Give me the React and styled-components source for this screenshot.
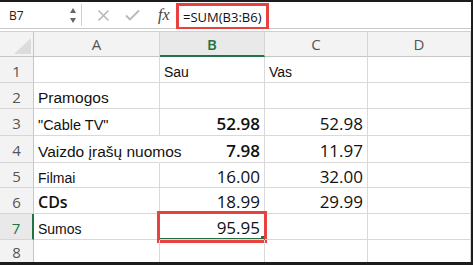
import React from "react";
import styled, { createGlobalStyle, css } from "styled-components";

const GlobalStyle = createGlobalStyle`
  html, body {
    margin: 0;
    padding: 0;
    background: #fff;
  }
`;

const GREEN = "#217346";
const RED = "#e8413f";
const GRID = "#d9d9d9";

const Frame = styled.div`
  width: 473px;
  height: 265px;
  box-sizing: border-box;
  border: 2px solid #1c1c1c;
  border-left: none;
  border-bottom-width: 3px;
  display: flex;
  flex-direction: column;
  overflow: hidden;
  background: #fff;
`;

const FormulaBar = styled.div`
  height: 26px;
  flex-shrink: 0;
  display: flex;
  align-items: stretch;
  border-bottom: 1px solid #c8c8c8;
`;

const NameBox = styled.div`
  width: 82px;
  display: flex;
  align-items: center;
  justify-content: space-between;
  padding: 0 4px 0 9px;
  box-sizing: border-box;
  border-right: 1px solid #d0d0d0;
  margin: 2px 0;
  font-family: "Open Sans", sans-serif;
  font-size: 12px;
  color: #222;
`;

const Spinner = styled.div`
  display: flex;
  flex-direction: column;
  gap: 5px;
  margin-right: 1px;
`;

const Arrow = styled.span`
  width: 0;
  height: 0;
  border-left: 3px solid transparent;
  border-right: 3px solid transparent;
  ${(p) =>
    p.$down
      ? css`border-top: 5px solid #666;`
      : css`border-bottom: 5px solid #666;`}
`;

const Tools = styled.div`
  display: flex;
  align-items: center;
  gap: 15px;
  padding-left: 15px;
  width: 94px;
  box-sizing: border-box;
`;

const Fx = styled.span`
  font-family: "Liberation Serif", serif;
  font-style: italic;
  font-size: 16px;
  color: #444;
  margin-left: 3px;
`;

const FormulaInput = styled.div`
  flex: 1;
  display: flex;
  align-items: stretch;
  padding-top: 1px;
`;

const FormulaHighlight = styled.div`
  display: flex;
  align-items: center;
  border: 3px solid ${RED};
  border-bottom-width: 2px;
  padding: 0 5px 0 4px;
  margin-bottom: -1px;
  font-family: "Open Sans", sans-serif;
  font-size: 13px;
  color: #111;
`;

const Sheet = styled.div`
  margin-top: 2px;
  flex: 1;
  display: grid;
  grid-template-columns: 34px 126px 105px 103px 1fr;
  grid-template-rows: 25px 26px 26px 27px 27px 25px 26px 26px 1fr;
  border-top: 1px solid #d0d0d0;
`;

const Corner = styled.div`
  background: #f3f3f3;
  border-right: 1px solid #c6c6c6;
  border-bottom: 1px solid #c6c6c6;
  display: flex;
  align-items: flex-end;
  justify-content: flex-end;
  padding: 0 2px 2px 0;
`;

const CornerTriangle = styled.span`
  width: 0;
  height: 0;
  border-left: 17px solid transparent;
  border-bottom: 16px solid #dcdcdc;
`;

const ColHead = styled.div`
  background: ${(p) => (p.$active ? "#e9e9e9" : "#f3f3f3")};
  border-right: 1px solid #d6d6d6;
  border-bottom: ${(p) => (p.$active ? `2px solid ${GREEN}` : "1px solid #c6c6c6")};
  display: flex;
  align-items: center;
  justify-content: center;
  font-family: "Open Sans", sans-serif;
  font-size: 15px;
  font-weight: ${(p) => (p.$active ? 600 : 400)};
  color: ${(p) => (p.$active ? GREEN : "#555")};
  padding-top: ${(p) => (p.$active ? "1px" : "0")};
`;

const RowHead = styled.div`
  background: ${(p) => (p.$active ? "#e9e9e9" : "#f3f3f3")};
  border-right: ${(p) => (p.$active ? `2px solid ${GREEN}` : "1px solid #c6c6c6")};
  border-bottom: 1px solid #d6d6d6;
  display: flex;
  align-items: center;
  justify-content: center;
  font-family: "Open Sans", sans-serif;
  font-size: 15px;
  color: ${(p) => (p.$active ? GREEN : "#555")};
  padding-top: 2px;
`;

const Cell = styled.div`
  position: relative;
  border-right: 1px solid ${(p) => (p.$noRight ? "transparent" : GRID)};
  border-bottom: 1px solid ${GRID};
  display: flex;
  align-items: center;
  justify-content: ${(p) => (p.$num ? "flex-end" : "flex-start")};
  padding: 0 4px 0 4px;
  white-space: nowrap;
  color: #111;
`;

const Label = styled.span`
  font-family: "Liberation Sans", Arial, sans-serif;
  font-size: ${(p) => p.$size || 14}px;
  padding-top: 5px;
  position: relative;
  z-index: 1;
`;

const Heading = styled.span`
  font-family: "Open Sans", sans-serif;
  font-size: 16px;
  font-weight: 600;
  padding-top: 2px;
`;

const Num = styled.span`
  font-family: "Open Sans", sans-serif;
  font-size: 17px;
  font-weight: ${(p) => (p.$bold ? 600 : 400)};
  padding-top: 2px;
`;

const SelectionMark = styled.div`
  position: absolute;
  left: -3px;
  top: -3px;
  right: -3px;
  bottom: -4px;
  border: 3px solid ${RED};
  pointer-events: none;
  &::before {
    content: "";
    position: absolute;
    left: 0;
    right: 0;
    bottom: 1px;
    height: 1px;
    background: ${GREEN};
  }
  &::after {
    content: "";
    position: absolute;
    right: 0;
    bottom: 1px;
    width: 3px;
    height: 3px;
    background: ${GREEN};
  }
`;

const XIcon = () => (
  <svg width="13" height="13" viewBox="0 0 13 13">
    <path d="M1.5 1.5 L11.5 11.5 M11.5 1.5 L1.5 11.5" stroke="#b8b8b8" strokeWidth="1.6" />
  </svg>
);

const CheckIcon = () => (
  <svg width="15" height="12" viewBox="0 0 15 12">
    <path d="M1 6.5 L5 10.5 L14 1.5" stroke="#b8b8b8" strokeWidth="1.8" fill="none" />
  </svg>
);

const rows = [
  { a: null, b: <Label>Sau</Label>, c: <Label>Vas</Label>, text: true },
  { a: <Label $size={15.5}>Pramogos</Label> },
  { a: <Label $size={14.5}>"Cable TV"</Label>, b: <Num $bold>52.98</Num>, c: <Num>52.98</Num> },
  { a: <Label $size={15.5}>Vaizdo įrašų nuomos</Label>, b: <Num $bold>7.98</Num>, c: <Num>11.97</Num>, overflow: true },
  { a: <Label>Filmai</Label>, b: <Num>16.00</Num>, c: <Num>32.00</Num> },
  { a: <Heading>CDs</Heading>, b: <Num>18.99</Num>, c: <Num>29.99</Num> },
  { a: <Label>Sumos</Label>, b: <Num>95.95</Num>, selected: true },
  {},
];

export default function App() {
  return (
    <>
      <GlobalStyle />
      <Frame>
        <FormulaBar>
          <NameBox>
            B7
            <Spinner>
              <Arrow />
              <Arrow $down />
            </Spinner>
          </NameBox>
          <Tools>
            <XIcon />
            <CheckIcon />
            <Fx>fx</Fx>
          </Tools>
          <FormulaInput>
            <FormulaHighlight>=SUM(B3:B6)</FormulaHighlight>
          </FormulaInput>
        </FormulaBar>
        <Sheet>
          <Corner>
            <CornerTriangle />
          </Corner>
          <ColHead>A</ColHead>
          <ColHead $active>B</ColHead>
          <ColHead>C</ColHead>
          <ColHead>D</ColHead>
          {rows.map((r, i) => (
            <React.Fragment key={i}>
              <RowHead $active={r.selected}>{i + 1}</RowHead>
              <Cell $noRight={r.overflow}>{r.a}</Cell>
              <Cell $num={!r.text}>
                {r.b}
                {r.selected && <SelectionMark />}
              </Cell>
              <Cell $num={!r.text}>{r.c}</Cell>
              <Cell />
            </React.Fragment>
          ))}
        </Sheet>
      </Frame>
    </>
  );
}
